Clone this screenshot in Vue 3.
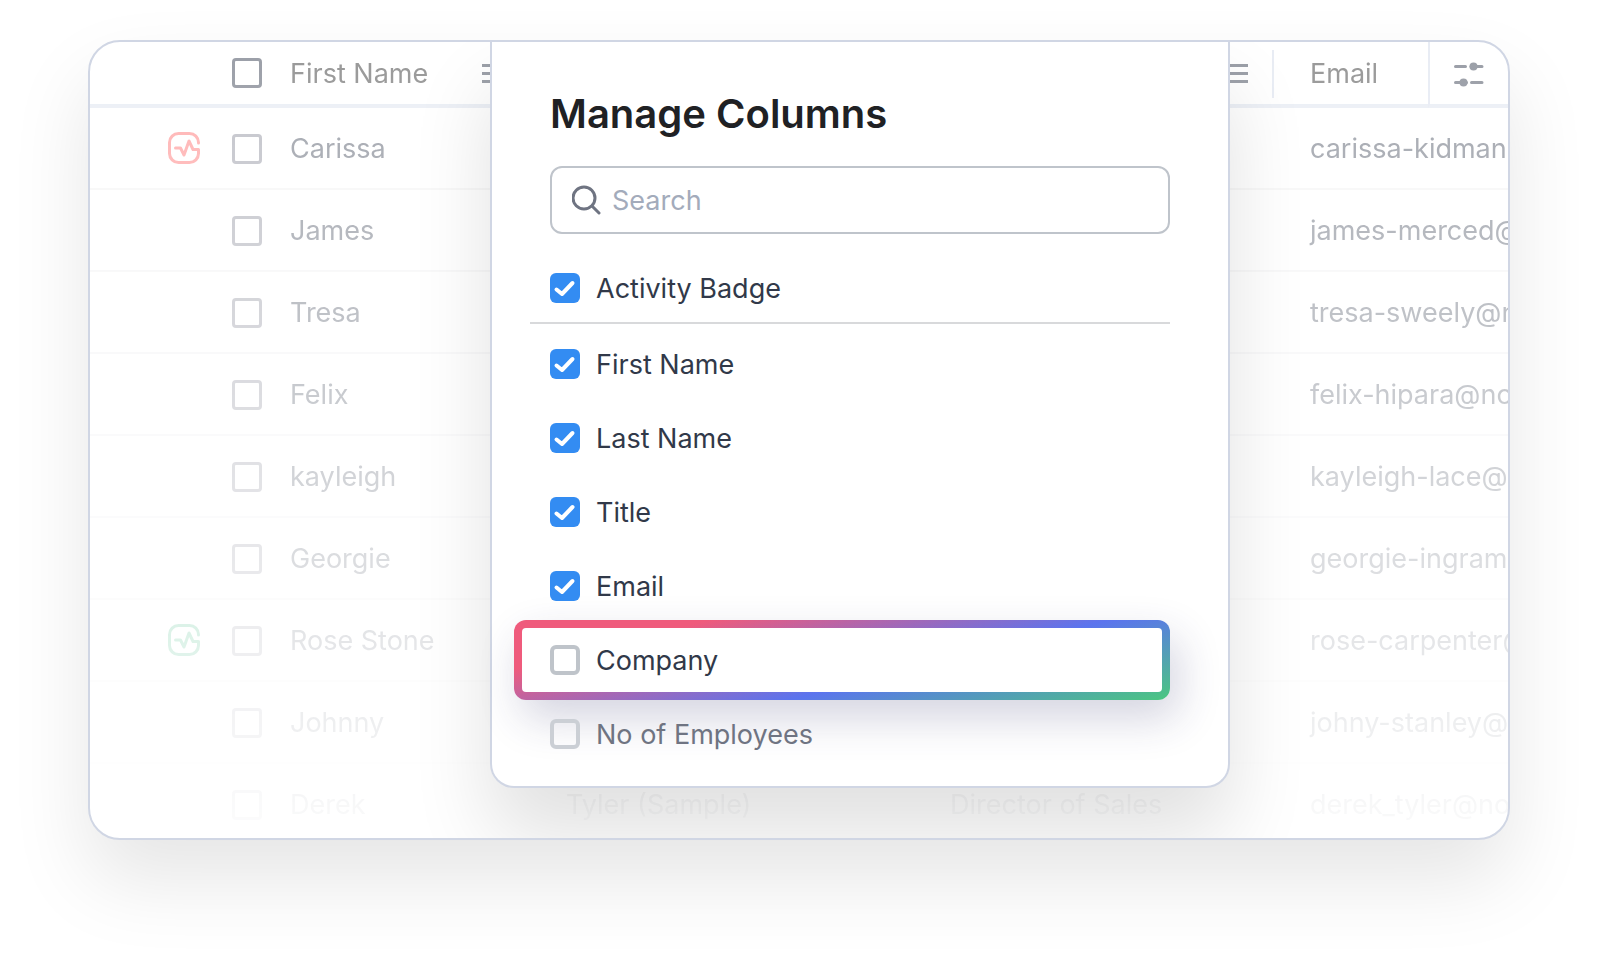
<template>
  <main class="page">
    <section class="card">
      <!-- contacts table behind the panel -->
      <table class="contacts">
        <colgroup>
          <col class="col-badge" />
          <col class="col-check" />
          <col class="col-first" />
          <col class="col-last" />
          <col />
          <col class="col-email" />
          <col class="col-settings" />
        </colgroup>
        <thead>
          <tr>
            <th></th>
            <th><input type="checkbox" class="row-check" aria-label="Select all" /></th>
            <th class="head">
              <div class="head-cell">
                <span>First Name</span>
                <button type="button" class="icon-btn" aria-label="First name options">
                  <svg width="22" height="20" viewBox="0 0 22 20"><path :d="menuPath" /></svg>
                </button>
              </div>
            </th>
            <th class="head">
              <div class="head-cell">
                <button type="button" class="icon-btn" aria-label="Last name options">
                  <svg width="22" height="20" viewBox="0 0 22 20"><path :d="menuPath" /></svg>
                </button>
              </div>
            </th>
            <th class="head">
              <div class="head-cell">
                <button type="button" class="icon-btn" aria-label="Title options">
                  <svg width="22" height="20" viewBox="0 0 22 20"><path :d="menuPath" /></svg>
                </button>
              </div>
            </th>
            <th class="head indent">Email</th>
            <th class="settings">
              <button type="button" class="icon-btn" aria-label="Manage columns">
                <svg width="30" height="24" viewBox="0 0 30 24">
                  <path d="M1.5 3.5h10M17 3.5h11M1.5 19.5h11M17.5 19.5h10.5" />
                  <circle cx="19.5" cy="3.5" r="4" />
                  <circle cx="9.5" cy="19.5" r="4" />
                </svg>
              </button>
            </th>
          </tr>
        </thead>
        <tbody>
          <tr v-for="contact in contacts" :key="contact.email">
            <td class="badge-cell">
              <svg v-if="contact.badge" :class="['badge', contact.badge]" width="32" height="32" viewBox="0 0 32 32">
                <path d="M30.5 11V10.5a9 9 0 0 0-9-9h-11a9 9 0 0 0-9 9v11a9 9 0 0 0 9 9h11a9 9 0 0 0 9-9v-4h-5.5l-4-8.5-5 14-3.5-7H7.5" />
              </svg>
            </td>
            <td><input v-model="contact.selected" type="checkbox" class="row-check" :aria-label="'Select ' + contact.first" /></td>
            <td>{{ contact.first }}</td>
            <td class="indent">{{ contact.last }}</td>
            <td class="indent">{{ contact.title }}</td>
            <td class="indent" colspan="2">{{ contact.email }}</td>
          </tr>
        </tbody>
      </table>

      <!-- manage columns panel -->
      <div class="panel">
        <h1>Manage Columns</h1>
        <label class="search">
          <svg width="30" height="30" viewBox="0 0 30 30">
            <circle cx="12" cy="13" r="11" />
            <path d="M20 21l7 7" />
          </svg>
          <input v-model="search" type="text" placeholder="Search" aria-label="Search columns" />
        </label>
        <ul class="columns">
          <li v-for="column in visibleColumns" :key="column.id" :class="column.state">
            <input :id="column.id" v-model="column.checked" type="checkbox" class="column-check" />
            <label :for="column.id">{{ column.label }}</label>
          </li>
        </ul>
      </div>
    </section>
  </main>
</template>

<script setup>
import { ref, computed } from 'vue'

// Three bars of the column menu icon
const menuPath = 'M0 1.5h22M0 9.5h22M0 17.5h22'

const search = ref('')

const contacts = ref([
  { first: 'Carissa', email: 'carissa-kidman@noemail.com', badge: 'red' },
  { first: 'James', email: 'james-merced@noemail.com' },
  { first: 'Tresa', email: 'tresa-sweely@noemail.com' },
  { first: 'Felix', email: 'felix-hipara@noemail.com' },
  { first: 'kayleigh', email: 'kayleigh-lace@noemail.com' },
  { first: 'Georgie', email: 'georgie-ingram@noemail.com' },
  { first: 'Rose Stone', email: 'rose-carpenter@noemail.com', badge: 'green' },
  { first: 'Johnny', email: 'johny-stanley@noemail.com' },
  { first: 'Derek', last: 'Tyler (Sample)', title: 'Director of Sales', email: 'derek_tyler@noemail.com' }
])

const columns = ref([
  { id: 'activity', label: 'Activity Badge', checked: true, state: 'pinned' },
  { id: 'first-name', label: 'First Name', checked: true },
  { id: 'last-name', label: 'Last Name', checked: true },
  { id: 'title', label: 'Title', checked: true },
  { id: 'email', label: 'Email', checked: true },
  { id: 'company', label: 'Company', checked: false, state: 'highlight' },
  { id: 'employees', label: 'No of Employees', checked: false, state: 'dimmed' }
])

// Filter the column list by the search text
const visibleColumns = computed(() => {
  const term = search.value.trim().toLowerCase()
  return columns.value.filter((column) => column.label.toLowerCase().includes(term))
})
</script>

<style>
body {
  margin: 0;
  background: #fff;
}
</style>

<style scoped>
* {
  box-sizing: border-box;
}
.page {
  padding: 40px 88px 136px;
  font-family: Inter, "Liberation Sans", sans-serif;
  font-size: 27px;
  line-height: 36px;
}
.card {
  position: relative;
  overflow: hidden;
  background: #fff;
  border: 2px solid #d0d6e4;
  border-radius: 32px;
  box-shadow: 0 40px 80px rgba(0, 0, 0, 0.1);
}

/* contacts table, fading out towards the bottom */
.contacts {
  width: 100%;
  margin-bottom: -8px;
  table-layout: fixed;
  border-collapse: separate;
  border-spacing: 0;
  color: #a0a4ac;
  mask-image: linear-gradient(to bottom, #000, rgba(0, 0, 0, 0.03));
}
.col-badge {
  width: 142px;
}
.col-check {
  width: 58px;
}
.col-first {
  width: 240px;
}
.col-last {
  width: 384px;
}
.col-email {
  width: 154px;
}
.col-settings {
  width: 80px;
}
.contacts th,
.contacts td {
  padding: 0;
  text-align: left;
  vertical-align: middle;
  font-weight: 400;
  white-space: nowrap;
}
.contacts th {
  height: 66px;
  border-bottom: 4px solid #ebeff5;
  color: #979797;
}
.contacts .head {
  padding-top: 2px;
}
.contacts td {
  height: 82px;
  padding-top: 2px;
  border-bottom: 2px solid #f6f6f7;
}
.contacts .badge-cell {
  padding-top: 0;
}
.contacts .indent {
  padding-left: 36px;
}
.head-cell {
  display: flex;
  align-items: center;
  height: 48px;
  padding-right: 24px;
  border-right: 2px solid #e8ecf4;
}
.head-cell .icon-btn {
  margin-left: auto;
}
.contacts .settings {
  border-left: 2px solid #e8ecf4;
  text-align: center;
}
.icon-btn {
  display: inline-flex;
  padding: 0;
  border: 0;
  background: none;
  vertical-align: middle;
  cursor: pointer;
}
.icon-btn svg {
  overflow: visible;
}
.icon-btn path {
  fill: none;
  stroke: #999da6;
  stroke-width: 3;
}
.icon-btn circle {
  fill: #999da6;
}
.settings path {
  stroke-linecap: round;
}
.badge-cell svg {
  display: block;
  margin-left: 78px;
}
.badge path {
  fill: none;
  stroke-width: 3;
  stroke-linecap: round;
  stroke-linejoin: round;
}
.badge.red path {
  stroke: #ffb2b2;
}
.badge.green path {
  stroke: #89d3b1;
}
.row-check {
  display: block;
  width: 30px;
  height: 30px;
  margin: 0;
  appearance: none;
  border: 3px solid #c2c3ca;
  border-radius: 4px;
}
th .row-check {
  border-color: #9a9ea7;
}
.row-check:checked {
  background: #c2c3ca;
}

/* manage columns panel */
.panel {
  position: absolute;
  top: 0;
  left: 400px;
  right: 278px;
  padding: 48px 58px 15px;
  background: #fff;
  border: 2px solid #d0d6e4;
  border-top: 0;
  border-radius: 0 0 24px 24px;
  box-shadow: 0 48px 80px rgba(0, 0, 0, 0.12);
}
h1 {
  margin: 0 0 28px;
  font-size: 40px;
  line-height: 48px;
  font-weight: 600;
  color: #202124;
}
.search {
  display: flex;
  align-items: center;
  gap: 10px;
  height: 68px;
  padding: 0 20px;
  border: 2px solid #bfc4cb;
  border-radius: 12px;
}
.search svg {
  flex: none;
  fill: none;
  stroke: #6f7482;
  stroke-width: 3;
  stroke-linecap: round;
}
.search input {
  flex: 1;
  min-width: 0;
  padding: 2px 0 0;
  border: 0;
  outline: 0;
  background: none;
  font: inherit;
  color: #313949;
}
.search input::placeholder {
  color: #a3abbb;
  opacity: 1;
}
.columns {
  margin: 20px 0 0;
  padding: 0;
  list-style: none;
}
.columns li {
  display: flex;
  align-items: center;
  gap: 16px;
  height: 74px;
  color: #313949;
}
.columns label {
  padding-top: 2px;
}
.columns .pinned {
  height: 70px;
  margin: 0 0 3px -20px;
  padding-left: 20px;
  border-bottom: 2px solid #d8d9db;
}
.columns .highlight {
  height: 80px;
  margin: -3px 0 -3px -36px;
  padding-left: 28px;
  border: 8px solid transparent;
  border-radius: 12px;
  background:
    linear-gradient(#fff, #fff) padding-box,
    linear-gradient(166deg, #ef5b7c 20%, #5b74ee 61%, #4bc780 100%) border-box;
  box-shadow: 8px 18px 44px rgba(40, 40, 100, 0.2);
}
.columns .dimmed {
  color: #6f7482;
}
.column-check {
  flex: none;
  width: 30px;
  height: 30px;
  margin: 0;
  appearance: none;
  border: 4px solid #bfc4ca;
  border-radius: 6px;
}
.dimmed .column-check {
  border-color: #cbcfd5;
}
.column-check:checked {
  border: 0;
  background: #338cf2 url("data:image/svg+xml,%3Csvg xmlns='http://www.w3.org/2000/svg' viewBox='0 0 30 30'%3E%3Cpath d='M6.5 16.5l5.5 4.5 10.5-11' fill='none' stroke='%23fff' stroke-width='4' stroke-linecap='round' stroke-linejoin='round'/%3E%3C/svg%3E");
}
</style>
